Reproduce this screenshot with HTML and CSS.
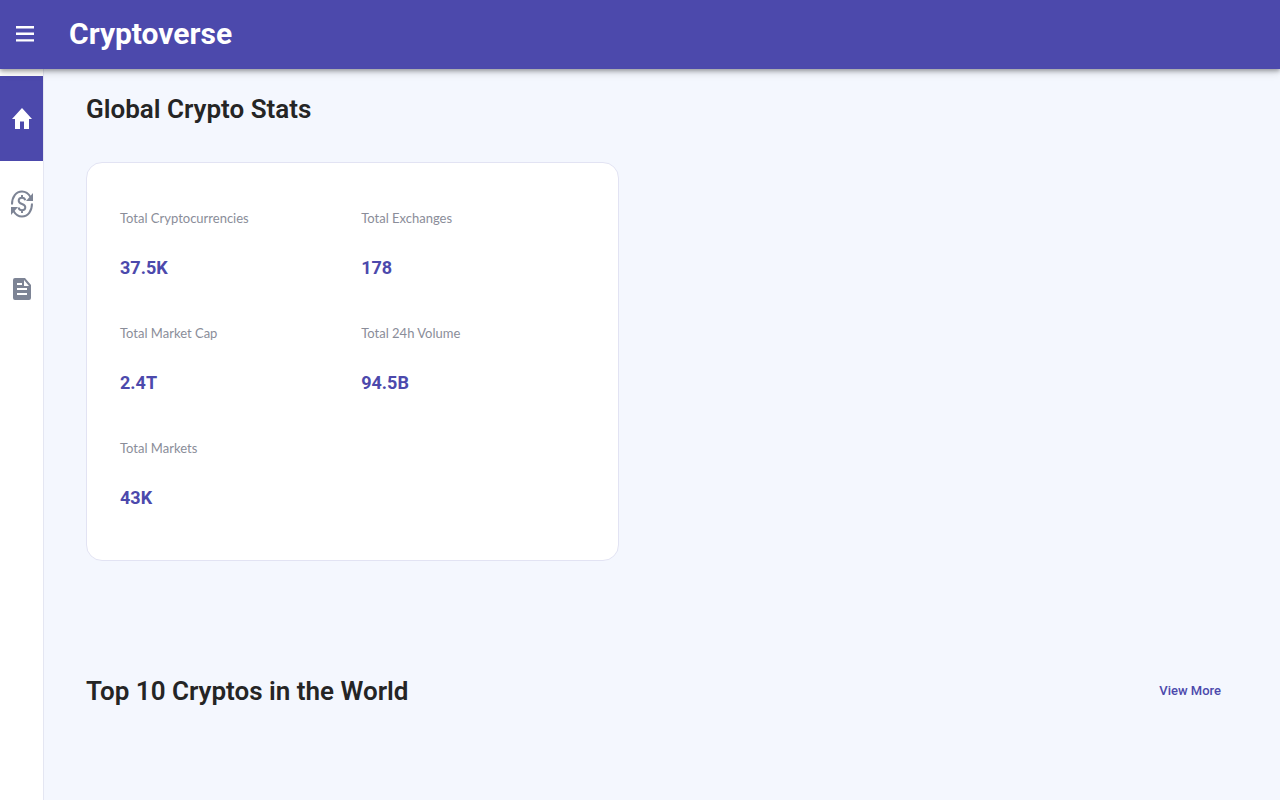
FILE: index.html
```html
<!DOCTYPE html>
<html lang="en">
<head>
<meta charset="utf-8">
<meta name="viewport" content="width=device-width, initial-scale=1">
<title>Cryptoverse</title>
<link rel="stylesheet" href="styles.css">
</head>
<body>
<header class="topbar">
  <button class="menu-button" type="button" aria-label="Open menu">
    <svg class="menu-icon" viewBox="0 0 18 16"><path d="M0 0h18v2.400H0zM0 6.600h18V9H0zM0 13.200h18v2.400H0z" fill="currentColor"/></svg>
  </button>
  <a class="brand" href="#">Cryptoverse</a>
</header>
<div class="shell">
  <nav class="sidebar" aria-label="Main">
    <a class="nav-item nav-item-active" href="#" aria-label="Home">
      <svg class="home-icon" viewBox="2 3 20 17" preserveAspectRatio="none"><path d="M10 20v-6h4v6h5v-8h3L12 3 2 12h3v8z" fill="currentColor"/></svg>
    </a>
    <a class="nav-item" href="#" aria-label="Cryptocurrencies">
      <svg class="exchange-icon" viewBox="0 0 22 28" fill="none" stroke="currentColor" stroke-width="2">
        <path d="M1 14.500C1 7 5 1.500 11 1.500c4 0 6.500 2 8.500 5.500M21 13.500c0 7.500-4 13-10 13-4 0-6.500-2-8.500-5.500"/>
        <path d="M22 3v8h-7zM0 25v-8h7z" fill="currentColor" stroke="none"/>
        <path d="M14.300 10.300C13.900 8.500 12.800 7.700 11 7.700c-2.100 0-3.300 1.200-3.300 3 0 4.300 6.600 2.300 6.600 6.600 0 1.900-1.300 3-3.300 3-1.900 0-3.100-1-3.500-2.800M11 5v3M11 20v3"/>
      </svg>
    </a>
    <a class="nav-item" href="#" aria-label="News">
      <svg class="news-icon" viewBox="0 0 18 22">
        <path fill="currentColor" fill-rule="evenodd" d="M2 0h10l6 7v13a2 2 0 0 1-2 2H2a2 2 0 0 1-2-2V2a2 2 0 0 1 2-2zM4 5v2h5V5zM4 10v2h10v-2zM4 15v2h10v-2zM11 2v6h5z"/>
      </svg>
    </a>
  </nav>
  <main class="content">
    <h1 class="heading">Global Crypto Stats</h1>
    <dl class="stats-card">
      <div class="stat"><dt class="stat-label">Total Cryptocurrencies</dt><dd class="stat-value">37.5K</dd></div>
      <div class="stat"><dt class="stat-label">Total Exchanges</dt><dd class="stat-value">178</dd></div>
      <div class="stat"><dt class="stat-label">Total Market Cap</dt><dd class="stat-value">2.4T</dd></div>
      <div class="stat"><dt class="stat-label">Total 24h Volume</dt><dd class="stat-value">94.5B</dd></div>
      <div class="stat"><dt class="stat-label">Total Markets</dt><dd class="stat-value">43K</dd></div>
    </dl>
    <div class="section-header">
      <h2 class="heading">Top 10 Cryptos in the World</h2>
      <a class="view-more" href="#">View More</a>
    </div>
  </main>
</div>
</body>
</html>
```

FILE: styles.css
```css
* {
  box-sizing: border-box;
}

body {
  margin: 0;
  min-height: 100vh;
  display: flex;
  flex-direction: column;
  background: #f4f7fe;
  color: #252525;
  font-family: Roboto, sans-serif;
}

a {
  color: inherit;
  text-decoration: none;
}

.topbar {
  position: relative;
  display: flex;
  align-items: center;
  gap: 35px;
  padding: 11px 16px 13px;
  background: #4c49ac;
  color: #fff;
  box-shadow: 0 2px 4px rgba(0, 0, 0, 0.3), 0 4px 8px rgba(0, 0, 0, 0.12);
}

.menu-button {
  display: flex;
  padding: 0;
  border: 0;
  background: none;
  color: inherit;
  cursor: pointer;
}

.menu-icon {
  width: 18px;
  height: 16px;
}

.brand {
  font-size: 30px;
  line-height: 45px;
  font-weight: 700;
}

.shell {
  flex: 1;
  display: flex;
}

.sidebar {
  flex: none;
  width: 44px;
  padding-top: 7px;
  background: #fff;
  border-right: 1px solid #e4e6f2;
}

.nav-item {
  display: flex;
  align-items: center;
  justify-content: center;
  height: 85px;
  color: #7d8495;
}

.nav-item-active {
  background: #4c49ac;
  color: #fff;
}

.home-icon {
  width: 20px;
  height: 21px;
}

.exchange-icon {
  width: 22px;
  height: 28px;
}

.news-icon {
  width: 18px;
  height: 22px;
}

.content {
  flex: 1;
  padding: 20px 59px 20px 42px;
}

.heading {
  margin: 0;
  font-size: 26px;
  line-height: 40px;
  font-weight: 600;
}

.stats-card {
  display: grid;
  grid-template-columns: 1fr 1fr;
  row-gap: 35px;
  width: 47%;
  min-width: 320px;
  margin: 33px 0 110px;
  padding: 40px 16px 47px 33px;
  background: #fff;
  border: 1px solid #e2e3f3;
  border-radius: 16px;
}

.stat-label {
  color: #8a8d99;
  font-family: Lato, sans-serif;
  font-size: 13px;
  line-height: 30px;
}

.stat-value {
  margin: 20px 0 0;
  color: #4c49ac;
  font-size: 18px;
  line-height: 30px;
  font-weight: 700;
}

.section-header {
  display: flex;
  align-items: center;
  justify-content: space-between;
  gap: 16px;
}

.view-more {
  color: #4c49ac;
  font-size: 13px;
  line-height: 20px;
  font-weight: 500;
}
```
